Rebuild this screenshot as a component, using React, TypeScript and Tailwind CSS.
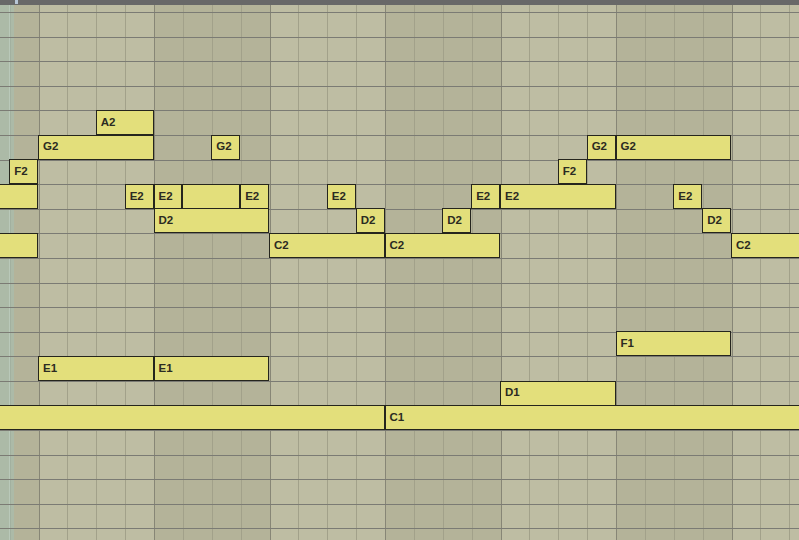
import React from "react";

const BEAT = 28.875;
const ORIGIN = 38.5;
const ROW = 24.6;
const TOP = 7;

type Note = { label?: string; row: number; start: number; end: number };

const ROWS: Record<string, number> = {
  A2: 4,
  G2: 5,
  F2: 6,
  E2: 7,
  D2: 8,
  C2: 9,
  F1: 13,
  E1: 14,
  D1: 15,
  C1: 16,
};

const notes: Note[] = [
  { label: "A2", row: ROWS.A2, start: 2, end: 4 },
  { label: "G2", row: ROWS.G2, start: 0, end: 4 },
  { label: "G2", row: ROWS.G2, start: 6, end: 7 },
  { label: "G2", row: ROWS.G2, start: 19, end: 20 },
  { label: "G2", row: ROWS.G2, start: 20, end: 24 },
  { label: "F2", row: ROWS.F2, start: -1, end: 0 },
  { label: "F2", row: ROWS.F2, start: 18, end: 19 },
  { row: ROWS.E2, start: -3, end: 0 },
  { label: "E2", row: ROWS.E2, start: 3, end: 4 },
  { label: "E2", row: ROWS.E2, start: 4, end: 5 },
  { row: ROWS.E2, start: 5, end: 7 },
  { label: "E2", row: ROWS.E2, start: 7, end: 8 },
  { label: "E2", row: ROWS.E2, start: 10, end: 11 },
  { label: "E2", row: ROWS.E2, start: 15, end: 16 },
  { label: "E2", row: ROWS.E2, start: 16, end: 20 },
  { label: "E2", row: ROWS.E2, start: 22, end: 23 },
  { label: "D2", row: ROWS.D2, start: 4, end: 8 },
  { label: "D2", row: ROWS.D2, start: 11, end: 12 },
  { label: "D2", row: ROWS.D2, start: 14, end: 15 },
  { label: "D2", row: ROWS.D2, start: 23, end: 24 },
  { row: ROWS.C2, start: -3, end: 0 },
  { label: "C2", row: ROWS.C2, start: 8, end: 12 },
  { label: "C2", row: ROWS.C2, start: 12, end: 16 },
  { label: "C2", row: ROWS.C2, start: 24, end: 28 },
  { label: "F1", row: ROWS.F1, start: 20, end: 24 },
  { label: "E1", row: ROWS.E1, start: 0, end: 4 },
  { label: "E1", row: ROWS.E1, start: 4, end: 8 },
  { label: "D1", row: ROWS.D1, start: 16, end: 20 },
  { row: ROWS.C1, start: -4, end: 12 },
  { label: "C1", row: ROWS.C1, start: 12, end: 28 },
];

// bars start one bar left of the origin
const bars = [0, 1, 2, 3, 4, 5, 6, 7];

function Bar({ dark }: { dark: boolean }) {
  return (
    <div
      className={`flex h-full w-[115.5px] shrink-0 border-l border-[#878676] ${
        dark ? "bg-[#b4b399]" : "bg-[#bebda3]"
      }`}
    >
      <div className="h-full flex-1" />
      <div className="h-full flex-1 border-l border-[#a2a18a]" />
      <div className="h-full flex-1 border-l border-[#a2a18a]" />
      <div className="h-full flex-1 border-l border-[#a2a18a]" />
    </div>
  );
}

function NoteBox({ note }: { note: Note }) {
  const left = ORIGIN + note.start * BEAT - 0.5;
  const width = (note.end - note.start) * BEAT;
  return (
    <div
      className="absolute flex items-center border-[1.5px] border-[#25251d] bg-[#e3df7b] pl-[4px] text-[11.5px] font-bold text-[#2b2b22]"
      style={{
        left,
        width,
        top: TOP + note.row * ROW - 0.5,
        height: ROW + 0.5,
        fontFamily: '"Liberation Sans", Arial, sans-serif',
      }}
    >
      {note.label}
    </div>
  );
}

export default function App() {
  return (
    <div className="flex h-[540px] w-[799px] flex-col overflow-hidden bg-[#bebda3]">
      <div className="relative h-[5px] shrink-0 bg-[#686868]">
        <div className="absolute left-[15px] top-0 h-[4px] w-[3px] bg-[#b9c7d6]" />
      </div>
      <div className="relative flex-1 overflow-hidden">
        <div className="absolute inset-y-0 left-[-77px] flex">
          {bars.map((b) => (
            <Bar key={b} dark={b % 2 === 0} />
          ))}
        </div>
        <div className="absolute inset-y-0 left-0 w-[14px] bg-[#a2c4b8]/45">
          <div className="absolute inset-y-0 left-[9px] w-px bg-[#c6d6cc]/50" />
        </div>
        <div className="absolute inset-0 flex flex-col pt-[7px]">
          {Array.from({ length: 22 }).map((_, i) => (
            <div
              key={i}
              className="h-[24.6px] shrink-0 border-t-[1.5px] border-[#7b7b74]"
            />
          ))}
        </div>
        {notes.map((n, i) => (
          <NoteBox key={i} note={n} />
        ))}
      </div>
    </div>
  );
}
